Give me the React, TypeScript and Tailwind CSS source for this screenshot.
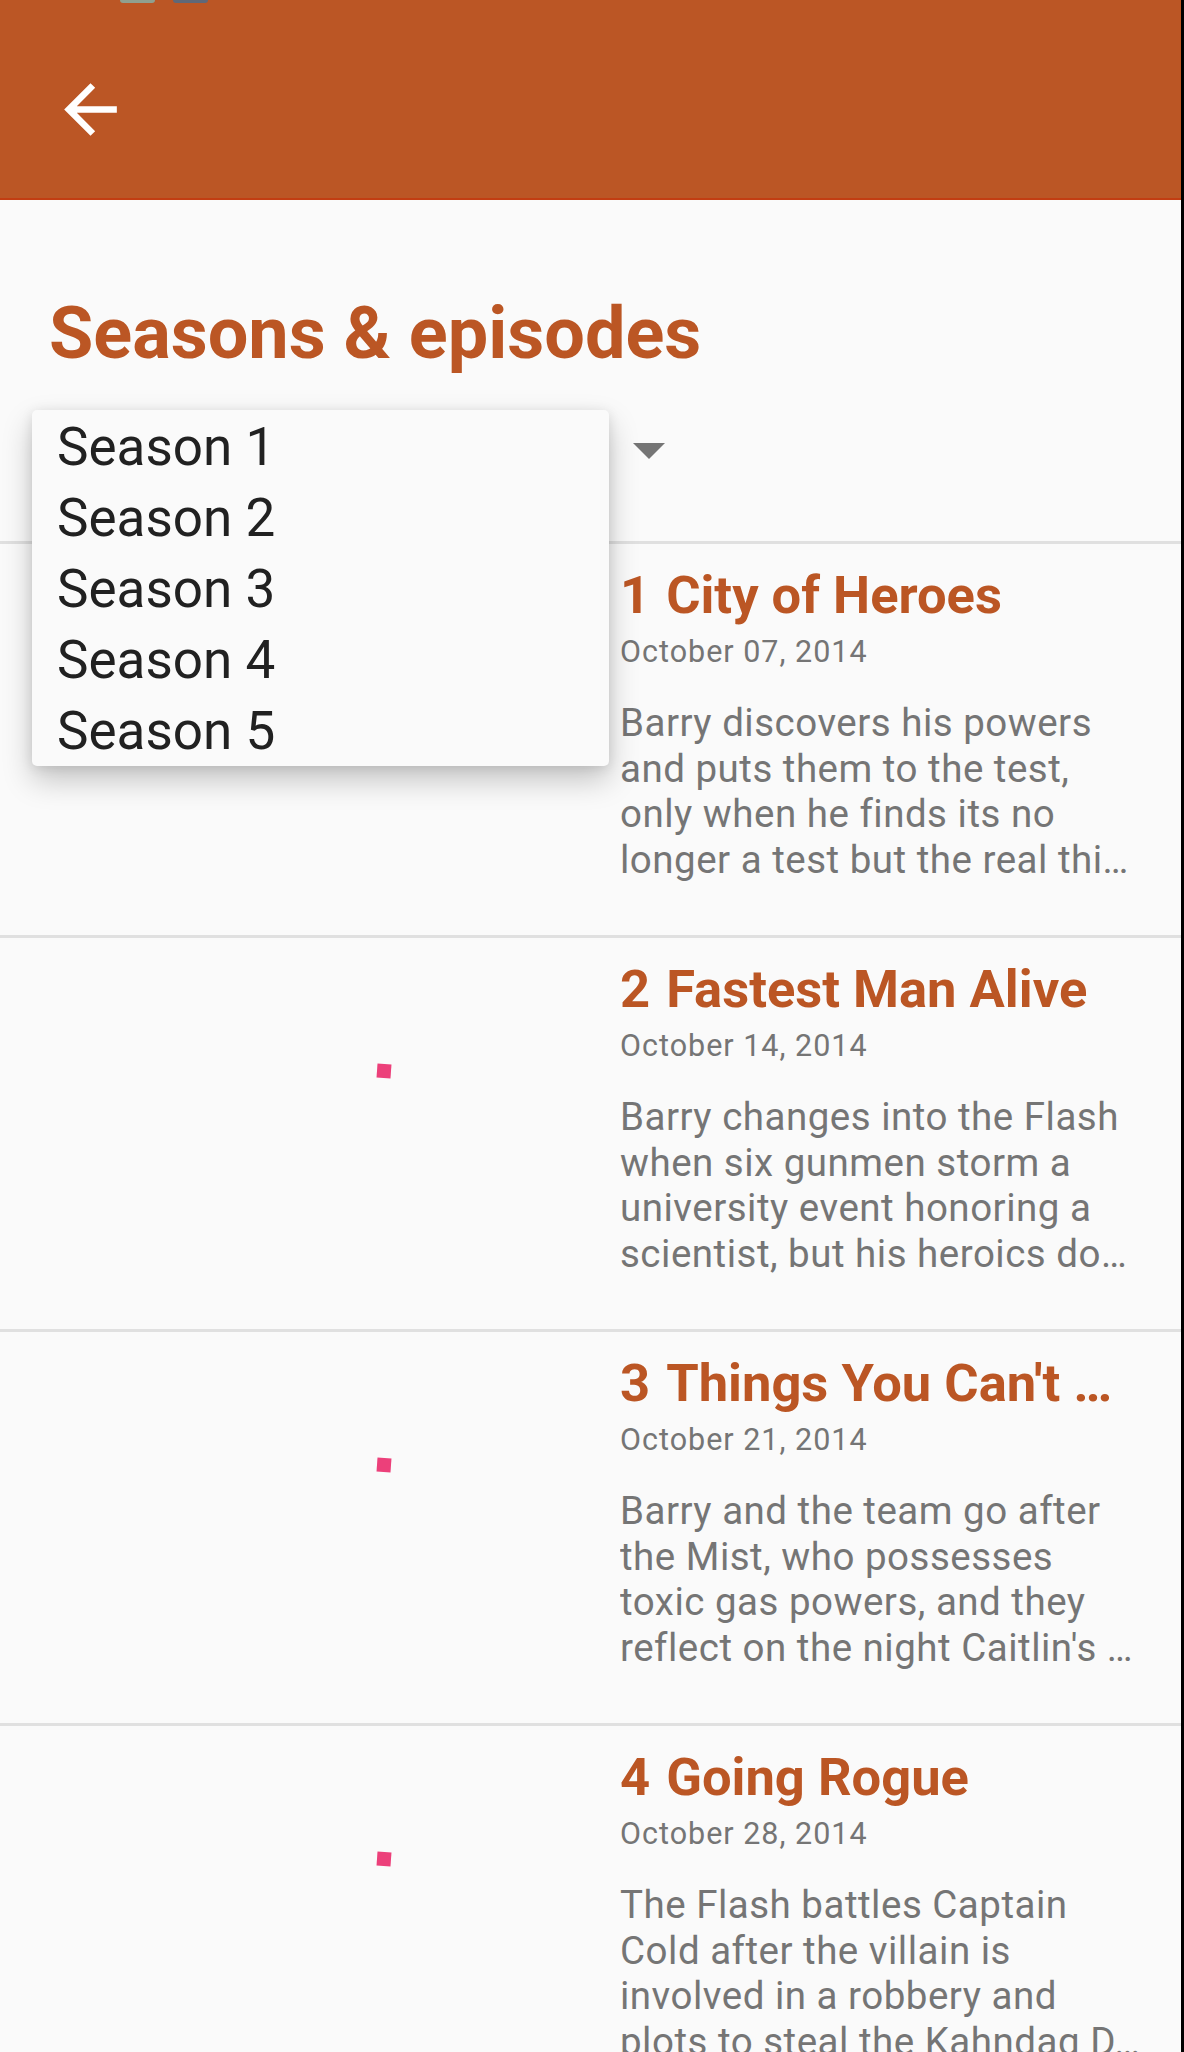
import React from "react";

// descriptions kept as they show in the list (ellipsized by the app)
const episodes = [
  {
    num: 1,
    title: "City of Heroes",
    date: "October 07, 2014",
    text: "Barry discovers his powers and puts them to the test, only when he finds its no longer a test but the real thi…",
    descClass: "w-[520px]",
  },
  {
    num: 2,
    title: "Fastest Man Alive",
    date: "October 14, 2014",
    text: "Barry changes into the Flash when six gunmen storm a university event honoring a scientist, but his heroics do…",
    descClass: "w-[520px]",
  },
  {
    num: 3,
    title: "Things You Can't …",
    date: "October 21, 2014",
    text: "Barry and the team go after the Mist, who possesses toxic gas powers, and they reflect on the night Caitlin's …",
    descClass: "w-[520px]",
  },
  {
    num: 4,
    title: "Going Rogue",
    date: "October 28, 2014",
    text: "The Flash battles Captain Cold after the villain is involved in a robbery and plots to steal the Kahndaq D…",
    descClass: "w-[534px]",
  },
];

const seasons = ["Season 1", "Season 2", "Season 3", "Season 4", "Season 5"];

function EpisodeRow({ ep }: { ep: (typeof episodes)[number] }) {
  return (
    <div>
      <div className="h-[3px] bg-[#E0E0E0]" />
      <div className="flex h-[391px]">
        {/* thumbnail placeholder with loading spinner */}
        <div className="w-[620px] shrink-0 pl-[377px] pt-[126px]">
          <div className="h-[14px] w-[14px] rotate-[4deg] bg-[#EC407A]" />
        </div>
        <div className="w-[520px] min-w-0 pt-[21px]">
          <div className="flex h-[60px] items-center text-[52.5px] font-bold leading-[60px] text-[#BB5624]">
            <span className="shrink-0">{ep.num}</span>
            <span className="ml-[16px] min-w-0 truncate">{ep.title}</span>
          </div>
          <p className="mt-[10px] text-[30.5px] leading-[34px] tracking-[1px] text-[#757575]">{ep.date}</p>
          <p
            className={`mt-[31px] line-clamp-4 text-[38.5px] leading-[45.5px] tracking-[0.5px] text-[#757575] ${ep.descClass}`}
          >
            {ep.text}
          </p>
        </div>
      </div>
    </div>
  );
}

export default function App() {
  return (
    <div
      className="relative flex h-[2052px] w-[1184px] overflow-hidden bg-[#FAFAFA]"
      style={{ fontFamily: "Roboto, 'Noto Sans', sans-serif" }}
    >
      <div className="w-[1181px] shrink-0">
        {/* App bar */}
        <div className="h-[200px] border-b-2 border-[#C23D12] bg-[#BB5625]">
          <div className="flex h-[4px]">
            <div className="ml-[120px] h-[3px] w-[35px] rounded-b-[6px] bg-[#8FA08F]" />
            <div className="ml-[18px] h-[3px] w-[35px] rounded-b-[6px] bg-[#5F6878]" />
          </div>
          <button className="ml-[51px] mt-[66px] block">
            <svg width="79" height="79" viewBox="0 0 24 24" fill="#FFFFFF">
              <path d="M20 11H7.83l5.59-5.59L12 4l-8 8 8 8 1.41-1.41L7.83 13H20v-2z" />
            </svg>
          </button>
        </div>

        {/* Heading */}
        <h1 className="mt-[98px] pl-[49px] text-[72px] font-bold leading-[72px] text-[#BB5624]">
          Seasons &amp; episodes
        </h1>

        {/* Season spinner */}
        <div className="flex h-[171px] items-start">
          <span className="ml-[57px] mt-[40px] w-[576px] text-[53px] leading-[71px] text-[#212121]">Season 1</span>
          <svg className="mt-[73px]" width="32" height="16" viewBox="0 0 32 16">
            <path d="M0 0h32L16 16z" fill="#757575" />
          </svg>
        </div>

        {episodes.map((ep) => (
          <EpisodeRow key={ep.num} ep={ep} />
        ))}
      </div>
      <div className="w-[3px] shrink-0 bg-black" />

      {/* Open dropdown menu */}
      <ul className="absolute left-[32px] top-[410px] z-10 h-[356px] w-[577px] overflow-hidden rounded-[5px] bg-[#FAFAFA] pt-[2px] shadow-[0_14px_30px_rgba(0,0,0,0.22),0_2px_12px_rgba(0,0,0,0.1)]">
        {seasons.map((s) => (
          <li key={s} className="h-[71px] pl-[25px] text-[53px] leading-[71px] text-[#212121]">
            {s}
          </li>
        ))}
      </ul>
    </div>
  );
}
